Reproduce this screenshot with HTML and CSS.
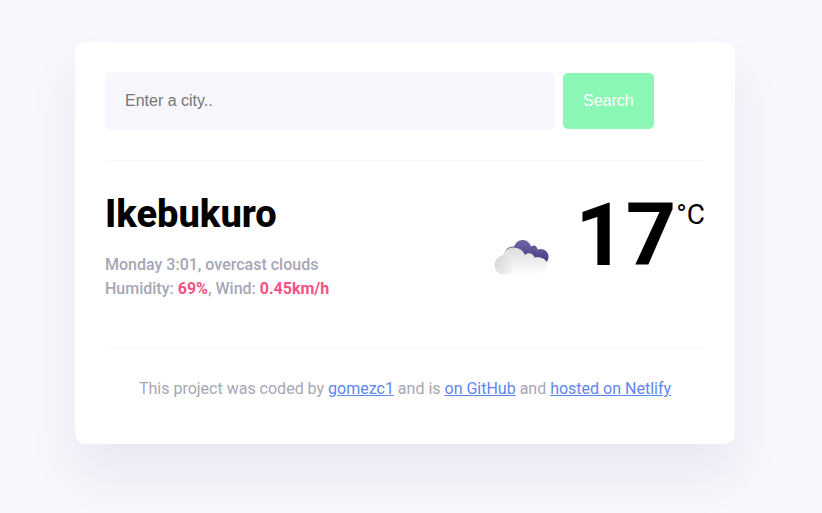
FILE: index.html
```html
<!DOCTYPE html>
<html lang="en">
<head>
<meta charset="utf-8">
<meta name="viewport" content="width=device-width, initial-scale=1">
<title>Weather</title>
<link rel="stylesheet" href="styles.css">
</head>
<body>
<div class="weather-app">
  <header>
    <form class="search-form">
      <input class="search-input" type="search" placeholder="Enter a city.." aria-label="City" required>
      <button class="search-button" type="submit">Search</button>
    </form>
  </header>
  <main class="weather">
    <div>
      <h1 class="city">Ikebukuro</h1>
      <p class="details">Monday 3:01, overcast clouds<br>Humidity: <strong>69%</strong>, Wind: <strong>0.45km/h</strong></p>
    </div>
    <div class="temperature">
      <svg class="icon" viewBox="0 0 88 88" role="img" aria-label="Overcast clouds">
        <defs>
          <linearGradient id="back" x1="0" y1="0" x2="0" y2="1">
            <stop offset="0" stop-color="#6f67a8"/>
            <stop offset="1" stop-color="#45397f"/>
          </linearGradient>
          <linearGradient id="front" gradientUnits="userSpaceOnUse" x1="0" y1="34" x2="0" y2="62">
            <stop offset="0" stop-color="#dcdcdc"/>
            <stop offset="0.5" stop-color="#eeeeee"/>
            <stop offset="1" stop-color="#ffffff"/>
          </linearGradient>
          <linearGradient id="puff" x1="0" y1="0" x2="1" y2="0.6">
            <stop offset="0" stop-color="#d2d2d2"/>
            <stop offset="1" stop-color="#f4f4f4"/>
          </linearGradient>
        </defs>
        <path fill="url(#back)" d="M27 46C26 39 30 33 37 33.500C39 29 42 27 46 27C50 27 53 30 54 33.500C57 31.500 60 33 60.500 36.500C66 34.500 71.500 38 71.500 43.500C71.500 46 70.500 48 69 50H30Z"/>
        <path fill="url(#front)" d="M24 61V47C26 39 30 34.500 36 34.500C42 34.500 46 37.500 48 42C51 39 56 40 57.500 44.500C64 43.500 69 46 70 50C71 57 67 61 62 61Z"/>
        <circle fill="url(#puff)" cx="27.500" cy="52" r="10"/>
      </svg>
      <span class="value">17</span>
      <span class="unit">°C</span>
    </div>
  </main>
  <footer>
    This project was coded by <a href="#">gomezc1</a> and is <a href="#">on GitHub</a> and <a href="#">hosted on Netlify</a>
  </footer>
</div>
</body>
</html>
```
FILE: styles.css
```css
* {
  box-sizing: border-box;
}

body {
  min-height: 100vh;
  margin: 0;
  padding: 42px 42px 42px 30px;
  background: #f8f7fd;
  font-family: Roboto, "Liberation Sans", sans-serif;
  font-size: 16px;
}

.weather-app {
  max-width: 660px;
  margin: 0 auto;
  padding: 30px;
  background: #fff;
  border-radius: 10px;
  box-shadow: 0 30px 50px rgba(65, 50, 100, 0.08);
}

header {
  padding-bottom: 30px;
  border-bottom: 1px solid #f8f7fd;
}

.search-form {
  display: flex;
  align-items: center;
  gap: 8px;
}

.search-input,
.search-button {
  border: 0;
  font-family: "Liberation Sans", sans-serif;
  font-size: 16px;
  line-height: 18px;
}

.search-input {
  flex: 0 1 75%;
  min-width: 0;
  padding: 20px;
  background: #f8f7fd;
  border-radius: 6px;
  appearance: none;
}

.search-input::placeholder {
  color: #757575;
}

.search-button {
  padding: 19px 20px;
  background: #8bf7b5;
  border-radius: 5px;
  color: #fff;
}

.weather {
  display: flex;
  justify-content: space-between;
  padding: 30px 0;
}

.city {
  margin: 0;
  font-size: 38px;
  font-weight: 800;
  line-height: 46px;
}

.details {
  margin: 16px 0;
  color: #a7a6b5;
  font-weight: 500;
  line-height: 24px;
}

.details strong {
  color: #f65282;
  font-weight: 700;
}

.temperature {
  display: flex;
  align-items: flex-start;
}

.icon {
  width: 88px;
  height: 88px;
  margin: 22px 10px 0 0;
}

.value {
  font-size: 88px;
  font-weight: 700;
  line-height: 88px;
}

.unit {
  font-size: 28px;
  line-height: 48px;
}

footer {
  padding: 30px 0 14px;
  border-top: 1px solid #f8f7fd;
  color: #a7a6b5;
  line-height: 22px;
  text-align: center;
}

footer a {
  color: #5d86f1;
}
```
